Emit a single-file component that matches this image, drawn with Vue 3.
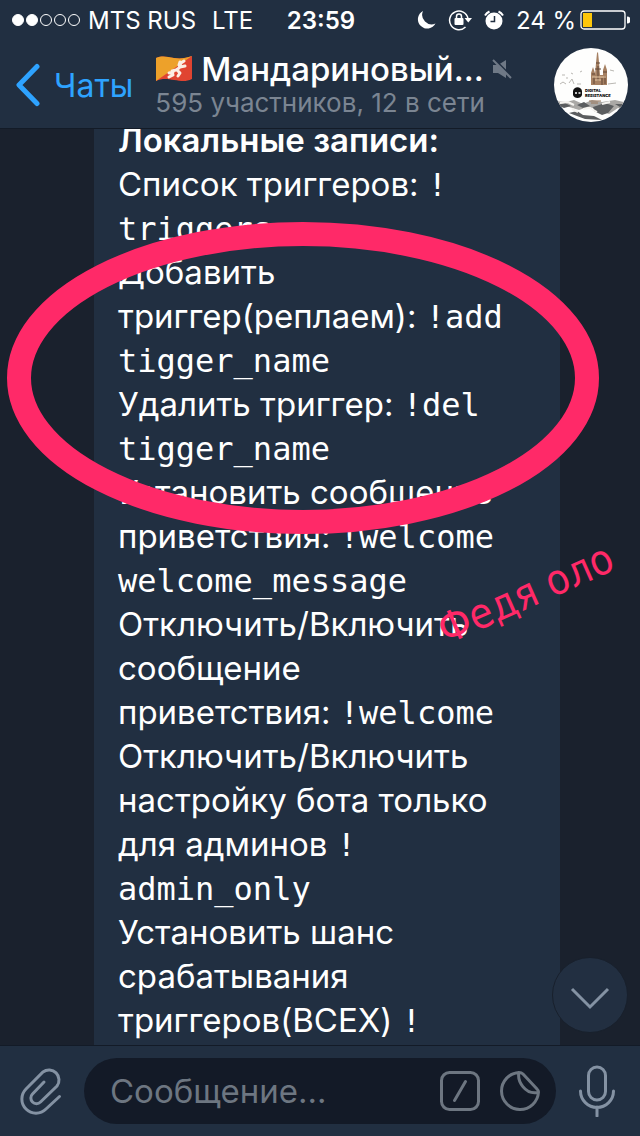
<script setup>
import { ref } from 'vue';

const draft = ref('');

const signal = [true, true, false, false, false];

const lines = [
  { bold: 'Локальные записи:' },
  { text: 'Список триггеров: ', code: '!' },
  { code: 'triggers' },
  { text: 'Добавить' },
  { text: 'триггер(реплаем): ', code: '!add' },
  { code: 'tigger_name' },
  { text: 'Удалить триггер: ', code: '!del' },
  { code: 'tigger_name' },
  { text: 'Установить сообщение' },
  { text: 'приветствия: ', code: '!welcome' },
  { code: 'welcome_message' },
  { text: 'Отключить/Включить' },
  { text: 'сообщение' },
  { text: 'приветствия: ', code: '!welcome' },
  { text: 'Отключить/Включить' },
  { text: 'настройку бота только' },
  { text: 'для админов ', code: '!' },
  { code: 'admin_only' },
  { text: 'Установить шанс' },
  { text: 'срабатывания' },
  { text: 'триггеров(ВСЕХ) ', code: '!' }
];
</script>

<template>
  <div class="screen">
    <header class="top">
      <div class="status">
        <div class="carrier">
          <span class="signal">
            <i v-for="(on, i) in signal" :key="i" :class="{ dot: true, on }"></i>
          </span>
          <span>MTS RUS</span>
          <span class="network">LTE</span>
        </div>
        <time class="clock">23:59</time>
        <div class="indicators">
          <svg width="20" height="20" viewBox="0 0 20 20">
            <path d="M7 1A9.3 9.3 0 1 0 19.5 13.5A9.5 9.5 0 0 1 7 1Z" fill="#fff" />
          </svg>
          <svg width="24" height="22" viewBox="0 0 24 22">
            <path d="M17.5 18A9.3 9.3 0 1 1 20 9.5" fill="none" stroke="#fff" stroke-width="1.5" />
            <path d="M16.5 9H24L20.3 13.5Z" fill="#fff" />
            <rect x="6.5" y="9" width="9" height="7" rx="1" fill="#fff" />
            <path d="M8.5 9V7.5a2.5 2.5 0 0 1 5 0V9" fill="none" stroke="#fff" stroke-width="1.5" />
          </svg>
          <svg width="20" height="20" viewBox="0 0 20 20">
            <circle cx="10" cy="11" r="8.5" fill="#fff" />
            <path d="M1 5.5A11 11 0 0 1 5.5 1.5M14.5 1.5A11 11 0 0 1 19 5.5" fill="none" stroke="#fff" stroke-width="2" />
            <path d="M10.5 6V11.5H6.5" fill="none" stroke="#212f41" stroke-width="1.5" />
          </svg>
          <span>24 %</span>
          <svg class="battery" width="50" height="20" viewBox="0 0 50 20">
            <rect x="1" y="1" width="44" height="18" rx="3" fill="none" stroke="#fff" stroke-width="1.3" />
            <path d="M3 3H12V17H3Z" fill="#fdc60a" />
            <path d="M47 6.5a3.5 3.5 0 0 1 0 7Z" fill="#fff" />
          </svg>
        </div>
      </div>

      <nav class="bar">
        <button class="back" type="button">
          <svg width="26" height="44" viewBox="0 0 26 44">
            <path d="M23 3.5L5 22L23 40.5" fill="none" stroke="#2ea3ff" stroke-width="5" stroke-linecap="round" stroke-linejoin="round" />
          </svg>
          <span>Чаты</span>
        </button>
        <div class="peer">
          <h1 class="title">
            <svg width="38" height="28" viewBox="0 0 38 28">
              <path d="M1 3C8 0 12 2 19 3S31 3 37 1V24C31 27 26 26 19 25S8 23 1 26Z" fill="#e04431" />
              <path d="M1 3C8 0 12 2 19 3S31 3 37 1L1 26Z" fill="#eda12a" />
              <path d="M14 22L18 20L17 16L21 15L24 13L26 8L29 6M22 15L25 18L23 21M25 12L30 11M18 17L14 18M25 7L24 10" fill="none" stroke="#fbeee4" stroke-width="3" stroke-linecap="round" stroke-linejoin="round" />
            </svg>
            <span>Мандариновый...</span>
            <svg width="20" height="20" viewBox="0 0 20 20">
              <path d="M1 6H6L14 1V19L6 14H1Z" fill="#6f7986" />
              <path d="M2 0L20 18" stroke="#212f41" stroke-width="2" />
              <path d="M1 1L19 19" stroke="#6f7986" stroke-width="2" />
            </svg>
          </h1>
          <p class="members">595 участников, 12 в сети</p>
        </div>
        <svg width="74" height="74" viewBox="0 0 74 74">
          <defs>
            <clipPath id="round"><circle cx="37" cy="37" r="37" /></clipPath>
          </defs>
          <g clip-path="url(#round)">
            <rect width="74" height="74" fill="#fefefd" />
            <path d="M37 37V25L39 19L41 25V27L42 15L43 5L44 4L45 14L46 27H49V22L51 16L53 22V37Z" fill="#a68062" />
            <path d="M42 15H46M41 21H47M38 26H41M49 24H53M40 29V36M44 18V33M48 30V37M51 28V36" stroke="#604737" stroke-width="1" />
            <path d="M38 29H52M41 32H47" stroke="#e7c9a5" stroke-width="1" />
            <path d="M6 36L9 34L12 36M15 35L18 31L20 36M23 36H27M54 36L62 35M8 27H11M17 25L19 26M26 24L28 23M56 22L60 23M12 30H14" stroke="#b9b7b2" stroke-width="1" fill="none" />
            <path d="M0 53L12 54L20 52L29 56L38 52L48 54L61 52L74 55V62L64 60L55 66L43 61L34 59L25 62L12 58L0 60Z" fill="#aaa8a5" />
            <path d="M3 57L11 55L17 58L10 60ZM23 57L30 54L36 58L29 60ZM39 59L51 55L60 58L54 65L48 67L40 63ZM15 65L23 63L29 67L40 68L48 72L31 71ZM61 56L71 56L66 59Z" fill="#5b5d5f" />
            <path d="M6 55L14 54L20 57M29 61L36 60L43 64M48 56L56 54M18 61L24 64" stroke="#f5f3ef" stroke-width="2" fill="none" />
            <path d="M35 53H47M37 55H44" stroke="#9a765b" stroke-width="1" />
            <path d="M19 47V43C20 38 27 38 28 43V47C27 51 20 51 19 47Z" fill="#111" />
            <path d="M21 45H23M24.5 45H26.5" stroke="#fff" stroke-width="1.5" />
            <text x="31" y="44" class="brand">DIGITAL</text>
            <text x="31" y="49" class="brand">RESISTANCE</text>
          </g>
        </svg>
      </nav>
    </header>

    <main class="chat">
      <article class="bubble">
        <p v-for="(line, i) in lines" :key="i" class="line">
          <b v-if="line.bold">{{ line.bold }}</b>{{ line.text }}<code v-if="line.code">{{ line.code }}</code>
        </p>
      </article>
      <button class="down" type="button" aria-label="Вниз">
        <svg width="40" height="24" viewBox="0 0 40 24">
          <path d="M2 3L20 21L38 3" fill="none" stroke="#8492a3" stroke-width="3" />
        </svg>
      </button>
    </main>

    <footer class="composer">
      <button type="button" aria-label="Прикрепить">
        <svg width="42" height="48" viewBox="0 0 42 48">
          <path d="M24 15L12.5 27A5.5 5.5 0 0 0 20.5 35L37 19A10 10 0 0 0 23 5L6 22A14 14 0 0 0 26 42L39.5 29.5" fill="none" stroke="#8492a3" stroke-width="3" stroke-linecap="round" />
        </svg>
      </button>
      <div class="field">
        <input v-model="draft" type="text" placeholder="Сообщение..." aria-label="Сообщение" />
        <button type="button" aria-label="Команды">
          <svg width="40" height="40" viewBox="0 0 40 40">
            <rect x="1.5" y="1.5" width="37" height="37" rx="8" fill="none" stroke="#6d7681" stroke-width="3" />
            <path d="M25.5 10.5L14.5 29.5" stroke="#6d7681" stroke-width="3" stroke-linecap="round" />
          </svg>
        </button>
        <button type="button" aria-label="Стикеры">
          <svg width="40" height="40" viewBox="0 0 40 40">
            <path d="M19 1.5A18.5 18.5 0 1 0 38.5 21C38.5 20 38 19 37 18L23 3C22 2 21 1.5 19 1.5C17 10 25 24 38 21.5" fill="none" stroke="#6d7681" stroke-width="3" stroke-linejoin="round" />
          </svg>
        </button>
      </div>
      <button type="button" aria-label="Голосовое сообщение">
        <svg width="38" height="52" viewBox="0 0 38 52">
          <rect x="10.5" y="2" width="17" height="33" rx="8.5" fill="none" stroke="#8492a3" stroke-width="3" />
          <path d="M2.5 26A16.5 16.5 0 0 0 35.5 26M19 42V51" fill="none" stroke="#8492a3" stroke-width="3" stroke-linecap="round" />
        </svg>
      </button>
    </footer>

    <svg class="markup" viewBox="0 0 640 1136">
      <ellipse cx="303" cy="378" rx="284" ry="144" fill="none" stroke="#ff2968" stroke-width="24" />
      <text class="scrawl" transform="translate(446 645) rotate(-24)">Федя оло</text>
    </svg>
  </div>
</template>

<style>
body {
  background-color: #1a212d;
}
</style>

<style scoped>
.screen {
  position: relative;
  display: flex;
  flex-direction: column;
  height: 100vh;
  overflow: hidden;
  background-color: #1a212d;
  color: #fff;
  font-family: Inter, 'Liberation Sans', sans-serif;
}
.screen svg {
  display: block;
  flex-shrink: 0;
}
button {
  display: flex;
  align-items: center;
  padding: 0;
  border: none;
  background: none;
  font: inherit;
  color: inherit;
}

.top {
  flex-shrink: 0;
  background-color: #212f41;
  border-bottom: 1px solid #131b27;
}
.status {
  display: grid;
  grid-template-columns: 1fr auto 1fr;
  align-items: center;
  height: 40px;
  padding: 0 10px 0 12px;
  font-size: 24px;
  white-space: nowrap;
}
.carrier,
.signal,
.indicators {
  display: flex;
  align-items: center;
}
.carrier {
  gap: 8px;
}
.signal {
  gap: 2px;
}
.dot {
  box-sizing: border-box;
  width: 12px;
  height: 12px;
  border: 1px solid #fff;
  border-radius: 50%;
}
.dot.on {
  background-color: #fff;
}
.network {
  margin-left: 8px;
}
.clock {
  font-weight: 600;
}
.indicators {
  justify-content: flex-end;
  gap: 12px;
}
.indicators .battery {
  margin-left: -8px;
}

.bar {
  display: flex;
  box-sizing: border-box;
  align-items: center;
  height: 88px;
  padding: 2px 12px 0 14px;
}
.back {
  gap: 14px;
  color: #2ea3ff;
  font-size: 32px;
}
.peer {
  flex: 1;
  min-width: 0;
  margin-left: 22px;
}
.title {
  display: flex;
  align-items: center;
  gap: 8px;
  margin: 0;
  font-size: 33px;
  font-weight: 500;
  line-height: 36px;
  white-space: nowrap;
}
.members {
  margin: 0;
  color: #7b8592;
  font-size: 26px;
  line-height: 32px;
  white-space: nowrap;
}
.brand {
  font-size: 4px;
  font-weight: 900;
  fill: #111;
}

.chat {
  position: relative;
  display: flex;
  flex: 1;
  flex-direction: column;
  justify-content: flex-end;
  min-height: 0;
  overflow: hidden;
}
.bubble {
  margin: 0 80px 0 94px;
  padding: 0 24px 3px;
  background-color: #212f41;
}
.line {
  height: 44px;
  margin: 0;
  font-size: 33px;
  line-height: 44px;
  white-space: pre;
}
.line b {
  font-weight: 600;
}
.line code {
  font-family: 'DejaVu Sans Mono', monospace;
  font-size: 32px;
}
.down {
  position: absolute;
  right: 12px;
  bottom: 12px;
  box-sizing: border-box;
  justify-content: center;
  width: 76px;
  height: 76px;
  padding-top: 6px;
  border: 1px solid #18202c;
  border-radius: 50%;
  background-color: #222f41;
}

.composer {
  display: flex;
  flex-shrink: 0;
  align-items: center;
  gap: 22px;
  height: 90px;
  padding: 0 24px 0 20px;
  border-top: 1px solid #131b27;
  background-color: #212f41;
}
.field {
  display: flex;
  flex: 1;
  align-items: center;
  gap: 20px;
  min-width: 0;
  height: 66px;
  padding: 0 16px 0 26px;
  border-radius: 33px;
  background-color: #131a27;
}
.field input {
  flex: 1;
  min-width: 0;
  padding: 0;
  border: none;
  outline: none;
  background: none;
  color: #fff;
  font: inherit;
  font-size: 33px;
}
.field input::placeholder {
  color: #6d7681;
  opacity: 1;
}

.markup {
  position: absolute;
  inset: 0;
  width: 100%;
  height: 100%;
  pointer-events: none;
}
.scrawl {
  fill: #ff2968;
  font-family: 'DejaVu Sans Condensed', 'DejaVu Sans', sans-serif;
  font-size: 42px;
}
</style>
